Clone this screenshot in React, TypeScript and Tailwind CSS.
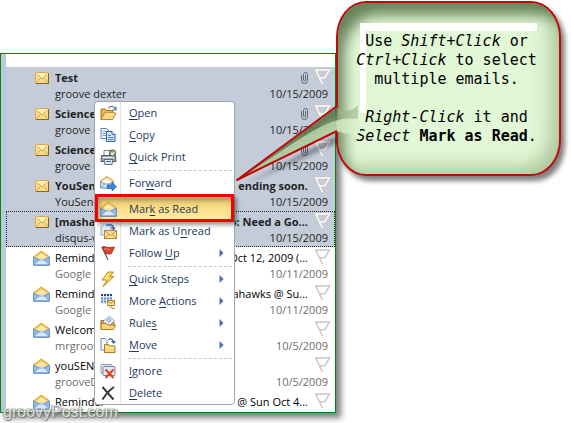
import { Fragment, ReactNode } from 'react';
import clsx from 'clsx';

interface Email {
  subject: string;
  rest?: string;
  sender?: string;
  date?: string;
  unread?: boolean;
  attachment?: boolean;
  focused?: boolean;
}

interface MenuEntry {
  before?: string;
  hotkey: string;
  after?: string;
  icon: ReactNode;
  submenu?: boolean;
  active?: boolean;
}

const emails: Email[] = [
  { subject: 'Test', sender: 'groove dexter', date: '10/15/2009', unread: true, attachment: true },
  { subject: 'Science', sender: 'groove dexter', date: '10/15/2009', unread: true, attachment: true },
  { subject: 'Science', sender: 'groove dexter', date: '10/15/2009', unread: true, attachment: true },
  { subject: 'YouSendIt', rest: 'ending soon.', sender: 'YouSendIt', date: '10/15/2009', unread: true },
  { subject: '[mashable]', rest: 'o: Need a Go...', sender: 'disqus-v', date: '10/15/2009', unread: true, focused: true },
  { subject: 'Reminder', rest: 'Oct 12, 2009 (...', sender: 'Google', date: '10/11/2009' },
  { subject: 'Reminder', rest: 'ahawks @ Su...', sender: 'Google', date: '10/11/2009' },
  { subject: 'Welcome', sender: 'mrgroove', date: '10/5/2009' },
  { subject: 'youSENDit', sender: 'grooveDexter', date: '10/5/2009' },
  { subject: 'Reminder', rest: '@ Sun Oct 4...' },
];

function ClosedMail() {
  return (
    <svg width="14" height="12" viewBox="0 0 14 12" aria-hidden="true">
      <rect x="0.5" y="0.5" width="13" height="11" rx="0.5" fill="#fbdc84" stroke="#d6ab4c" />
      <path d="M1 1h12v2L7 7.5 1 3z" fill="#fff0b8" />
      <path d="M1.5 2 7 7l5.500-5M1.500 10.500 5 6.500M12.500 10.500 9 6.500" fill="none" stroke="#c4963c" strokeWidth="0.900" />
      <path d="M1 11.500h12.500V1.500" fill="none" stroke="#86611f" />
    </svg>
  );
}

function OpenMail() {
  return (
    <svg width="17" height="16" viewBox="0 0 17 16" aria-hidden="true">
      <path d="M1 6.500 8.500 1 16 6.500v8H1z" fill="#f9c74f" stroke="#dba23a" />
      <path d="M3.500 7 8.500 3.500 13.500 7V11h-10z" fill="#fff3d0" />
      <path d="M4.500 6.500h8L14 9H3z" fill="#ffe09a" />
      <path d="M.5 7 8.500 11 16.500 7v8H.5z" fill="#8fbaea" stroke="#6d97cc" />
      <path d="M1 14.500 6 10h5l5 4.500" fill="#d6e9fc" stroke="#84acdc" />
      <path d="M.5 15.200h16" stroke="#456fa8" strokeWidth="0.800" />
    </svg>
  );
}

function FolderIcon() {
  return (
    <svg width="17" height="16" viewBox="0 0 17 16" aria-hidden="true">
      <path d="M1 14.500V4h4.500L7 5.500h6V10" fill="#e6b04a" stroke="#a97a24" />
      <path d="M1 14.500 4.500 8H16l-3.500 6.500z" fill="#ffd67c" stroke="#b98429" />
      <path d="M5 9h9.500" stroke="#fff0bf" />
      <path d="M8.500 3c2-2.500 5.500-2.500 6.500 1M16 1.500V5h-3.500" fill="none" stroke="#4f7295" strokeWidth="1.200" />
    </svg>
  );
}

function CopyIcon() {
  return (
    <svg width="16" height="16" viewBox="0 0 16 16" aria-hidden="true">
      <path d="M1 1.500h5.500L9 4v7.500H1z" fill="#eef5ff" stroke="#5b82bd" />
      <path d="M2.500 4.500h4M2.500 6.500h5M2.500 8.500h5" stroke="#7ba2da" />
      <path d="M6.500 4.500h5.500L15 7.500v7H6.500z" fill="#d5e6fb" stroke="#315fa8" />
      <path d="M12 4.500v3h3" fill="#fff" stroke="#315fa8" />
      <path d="M8 8.500h3M8 10.500h5.500M8 12.500h5.500" stroke="#4f82cc" />
    </svg>
  );
}

function PrinterIcon() {
  return (
    <svg width="17" height="16" viewBox="0 0 17 16" aria-hidden="true">
      <path d="M4 6V1.500h6V6" fill="#fff" stroke="#7d8591" />
      <path d="M1.500 6.500h14l.5 6H1z" fill="#a4a9b2" stroke="#4f5560" />
      <path d="M3 8.500h11" stroke="#eef0f3" />
      <path d="M4 10.500h9l-1 5H5z" fill="#dbe8f8" stroke="#626a78" />
      <path d="M6 12.500h5" stroke="#3b6fb8" />
      <circle cx="12.500" cy="4" r="3.300" fill="#7fa070" stroke="#4d6b42" strokeWidth="0.800" />
      <path d="m11 4 1.200 1.300L14.200 2.800" fill="none" stroke="#fff" strokeWidth="1.200" />
    </svg>
  );
}

function ForwardIcon() {
  return (
    <svg width="17" height="16" viewBox="0 0 17 16" aria-hidden="true">
      <path d="M.5 6 7 1.500 13.500 6v7H.5z" fill="#f9c74f" stroke="#d0a04c" />
      <path d="M2.500 6 7 3l4.500 3v3h-9z" fill="#fffaf0" />
      <path d="M.5 6.500 7 10l6.500-3.500v6.500H.5z" fill="#c4dcf5" stroke="#7c9fcb" />
      <path d="M1 12.500 5 9h4" fill="#eaf4ff" stroke="#7ea4d1" />
      <path d="M7.500 10h4.500V7.500l4.500 4.200-4.500 4.200V13.500H7.500z" fill="#3f86d8" stroke="#245fa6" strokeWidth="0.800" />
    </svg>
  );
}

function UnreadIcon() {
  return (
    <svg width="17" height="16" viewBox="0 0 17 16" aria-hidden="true">
      <path d="M1 4 6 .8 11 4v8H1z" fill="#dce9f8" stroke="#8ba7cc" />
      <rect x="4.500" y="7.500" width="12" height="8" fill="#fddf8f" stroke="#b98a35" />
      <path d="m5 8 5.500 4.500L16 8M5 15l4-4M16 15l-4-4" fill="none" stroke="#b98a35" strokeWidth="0.900" />
      <path d="M6 3c3-2.500 7-1.500 7.500 2.500" fill="none" stroke="#3a6cb3" strokeWidth="1.600" />
      <path d="M10.500 4.500h5.500L13.500 7.500z" fill="#3a6cb3" />
    </svg>
  );
}

function RedFlagIcon() {
  return (
    <svg width="16" height="16" viewBox="0 0 16 16" aria-hidden="true">
      <path d="M2 2 8 15" stroke="#6a6f78" strokeWidth="1.400" />
      <path d="M2 2c3-1.500 5 1 7.500.5L14.500 2 11.500 8.500C9 10 8 8 5.500 9z" fill="#d9412c" stroke="#a92818" strokeWidth="0.800" />
      <path d="M4 4c2-1 4 1 6 .5" fill="none" stroke="#f28a70" />
    </svg>
  );
}

function LightningIcon() {
  return (
    <svg width="16" height="16" viewBox="0 0 16 16" aria-hidden="true">
      <path d="M8 1h5.500L10 5.500h4L3 15.500 7 9H2z" fill="#ffd24f" stroke="#b98a2c" />
      <path d="M8.500 2.500 5 7.800h3.500" fill="none" stroke="#fff2bd" />
    </svg>
  );
}

function ActionsIcon() {
  return (
    <svg width="16" height="16" viewBox="0 0 16 16" aria-hidden="true">
      <rect x="1" y="1" width="11" height="10" fill="#dbe7f7" />
      <path d="M1 2h11" stroke="#2e4a78" strokeWidth="2" strokeDasharray="2 1" />
      <path d="M1 5.500h11M1 8.500h8" stroke="#5f88c4" strokeWidth="2" strokeDasharray="2 1" />
      <rect x="7.500" y="7.500" width="7" height="5" fill="#ffe08f" stroke="#b98a35" />
      <path d="m8 8 3 2.500L14 8" fill="none" stroke="#b98a35" />
      <path d="M9 14h3v1.500h3" fill="none" stroke="#c18f2b" />
    </svg>
  );
}

function RulesIcon() {
  return (
    <svg width="16" height="16" viewBox="0 0 16 16" aria-hidden="true">
      <path d="M1 14.500V5.500h4L6.500 7H14v3" fill="#e0a842" stroke="#a0731f" />
      <path d="m3.500 6 6-5 5 5-4.500 4H5z" fill="#eaf1fa" stroke="#7f95b3" strokeWidth="0.800" />
      <path d="m6.500 6 3.500-3M8 7.500 11.500 4.500" stroke="#4d7cc0" />
      <path d="M1 14.500V8.500h5.500l1.500 1.500h7.500l-2 4.500z" fill="#ffd277" stroke="#b07d26" />
    </svg>
  );
}

function MoveIcon() {
  return (
    <svg width="16" height="16" viewBox="0 0 16 16" aria-hidden="true">
      <path d="M1 1.500h4L7 3.500V13H1z" fill="#f5f9ff" stroke="#6f88ab" />
      <path d="M8.500 3c1.500-2 4.500-1 5 1.500" fill="none" stroke="#39659e" strokeWidth="1.200" />
      <path d="M11 4h5l-2.500 3z" fill="#39659e" />
      <path d="M4.500 15.500V7.500h4l1 1.500H15v6.500z" fill="#ffd277" stroke="#a97a24" />
      <path d="M5.500 10.500H14" stroke="#fff0bf" />
    </svg>
  );
}

function IgnoreIcon() {
  return (
    <svg width="16" height="16" viewBox="0 0 16 16" aria-hidden="true">
      <rect x="1" y="1.500" width="11" height="9" rx="1" fill="#eef2f7" stroke="#8594a9" />
      <rect x="3" y="3.500" width="12" height="9" rx="1" fill="#e3eaf3" stroke="#74859d" />
      <path d="m5.500 6.500 8 8.500M13.500 6.500l-8 8.500" stroke="#e0452c" strokeWidth="2.200" />
    </svg>
  );
}

function DeleteIcon() {
  return (
    <svg width="16" height="16" viewBox="0 0 16 16" aria-hidden="true">
      <path d="M2.500 2 13.500 14.500" stroke="#3a3a3a" strokeWidth="2" />
      <path d="M14 2C9 5.500 6 9 2.500 14.500" fill="none" stroke="#3a3a3a" strokeWidth="2" />
    </svg>
  );
}

function FlagOutline({ selected }: { selected?: boolean }) {
  return (
    <svg width="17" height="18" viewBox="0 0 17 18" fill="none" aria-hidden="true">
      {selected && (
        <path d="M1.500 1.500c4 2 8.500-.5 14 .5L11 9.500c-2 1-3-.5-5 .5M1.500 1.500 8.500 16" stroke="#b9b9b9" strokeWidth="3" />
      )}
      <path
        d="M1.500 1.500c4 2 8.500-.5 14 .5L11 9.500c-2 1-3-.5-5 .5M1.500 1.500 8.500 16"
        stroke={selected ? '#f6f4f0' : '#c9c9c9'}
        strokeWidth={selected ? 2 : 1.5}
      />
    </svg>
  );
}

function ClipIcon() {
  return (
    <svg width="7" height="12" viewBox="0 0 7 12" fill="none" stroke="#5b6473" aria-hidden="true">
      <path d="M.5 3v5.500a3 3 0 0 0 6 0V2.500a2 2 0 0 0-4 0V8a1 1 0 0 0 2 0V3" />
    </svg>
  );
}

const menuGroups: MenuEntry[][] = [
  [
    { hotkey: 'O', after: 'pen', icon: <FolderIcon /> },
    { hotkey: 'C', after: 'opy', icon: <CopyIcon /> },
    { hotkey: 'Q', after: 'uick Print', icon: <PrinterIcon /> },
  ],
  [{ before: 'For', hotkey: 'w', after: 'ard', icon: <ForwardIcon /> }],
  [
    { before: 'Mar', hotkey: 'k', after: ' as Read', icon: <OpenMail />, active: true },
    { before: 'Mark as U', hotkey: 'n', after: 'read', icon: <UnreadIcon /> },
    { before: 'Follow ', hotkey: 'U', after: 'p', icon: <RedFlagIcon />, submenu: true },
  ],
  [
    { hotkey: 'Q', after: 'uick Steps', icon: <LightningIcon />, submenu: true },
    { before: 'More ', hotkey: 'A', after: 'ctions', icon: <ActionsIcon />, submenu: true },
    { before: 'Rule', hotkey: 's', icon: <RulesIcon />, submenu: true },
    { hotkey: 'M', after: 'ove', icon: <MoveIcon />, submenu: true },
  ],
  [
    { hotkey: 'I', after: 'gnore', icon: <IgnoreIcon /> },
    { hotkey: 'D', after: 'elete', icon: <DeleteIcon /> },
  ],
];

function EmailRow({ email }: { email: Email }) {
  return (
    <li
      className={clsx(
        'flex h-9 border border-transparent pt-0.5 pr-0.5 last:h-[21px]',
        email.unread ? 'bg-[#c5ccd9] text-[#1f1f24]' : 'bg-white text-black',
        email.focused && 'border-dotted border-[#222222]!'
      )}
    >
      <span className="flex h-4 w-12 shrink-0 items-center pl-[26px]">
        <span className="flex w-[17px] justify-center">{email.unread ? <ClosedMail /> : <OpenMail />}</span>
      </span>
      <div className="min-w-0 flex-1">
        <div className="flex h-4 items-center gap-1.5">
          <span className={clsx('min-w-0 flex-1 overflow-hidden text-[11px] leading-4 whitespace-nowrap', email.unread && 'font-bold')}>
            {email.subject}
          </span>
          {email.rest && (
            <span className={clsx('text-[11px] leading-4 whitespace-nowrap', email.unread && 'font-bold')}>
              {email.rest}
            </span>
          )}
          {email.attachment && <ClipIcon />}
          <span className="w-[18px] shrink-0 pb-0.5">
            <FlagOutline selected={email.unread} />
          </span>
        </div>
        {email.date && (
          <div className={clsx('flex h-4 justify-between pr-1 text-[11px] leading-4 whitespace-nowrap', !email.unread && 'text-[#6d6d6d]')}>
            <span>{email.sender}</span>
            <span>{email.date}</span>
          </div>
        )}
      </div>
    </li>
  );
}

function MenuItem({ entry }: { entry: MenuEntry }) {
  return (
    <button
      type="button"
      role="menuitem"
      className={clsx(
        'relative flex h-[22px] w-full items-center pr-2.5 pl-[5px] text-left text-[11px] text-[#1e395b]',
        entry.active && 'bg-linear-to-b from-[#e5c46a] via-[#fbe08a] to-[#fdeaa6]'
      )}
    >
      <span className="mr-3 w-[17px] shrink-0">{entry.icon}</span>
      <span className="flex-1 whitespace-pre">
        {entry.before}
        <span className="underline underline-offset-2">{entry.hotkey}</span>
        {entry.after}
      </span>
      {entry.submenu && (
        <svg width="5" height="8" viewBox="0 0 5 8" aria-hidden="true">
          <path d="M.5 0 4.500 4 .5 8z" fill="#4a6fb5" />
        </svg>
      )}
      {entry.active && (
        <span className="absolute inset-x-0 -top-1 h-7 border-3 border-[#f60000] shadow-[3px_3px_4px_rgba(0,0,0,0.4),inset_2px_3px_4px_rgba(80,80,80,0.45)]" />
      )}
    </button>
  );
}

function ContextMenu() {
  return (
    <div
      role="menu"
      className="absolute top-[47px] right-[100px] w-[141px] rounded-sm border border-[#a0a5b0] bg-white bg-[linear-gradient(#e2e4e7,#e2e4e7)] bg-[length:1px_100%] bg-[position:25px_0] bg-no-repeat"
    >
      {menuGroups.map((group, i) => (
        <Fragment key={i}>
          {i > 0 && (
            <div role="separator" className="flex h-1 items-center pr-0.5 pl-[33px]">
              <div className="w-full border-t border-dashed border-[#c9c9c9]" />
            </div>
          )}
          {group.map((entry, j) => (
            <MenuItem key={j} entry={entry} />
          ))}
        </Fragment>
      ))}
    </div>
  );
}

function Callout() {
  return (
    <aside className="relative mt-px mr-2.5 w-[225px] shrink-0 self-start font-['DejaVu_Sans_Mono',monospace]">
      <div className="rounded-[30px/36px] border-2 border-[#bd0a0a] bg-[#e1f7d5] px-[22px] py-5 shadow-[4px_5px_5px_rgba(0,0,0,0.5),inset_12px_18px_14px_-6px_rgba(64,92,50,0.75),inset_-10px_-8px_18px_-2px_rgba(120,150,100,0.5)]">
        <div className="h-[131px] border-t-8 border-white bg-[linear-gradient(#ffffff,#ffffff)] bg-[length:6px_82px] bg-no-repeat pt-px">
          <div className="-mr-0.5 -ml-1.5 text-center text-[15px] leading-[19px] whitespace-nowrap text-black">
            <p>
              Use <em>Shift+Click</em> or
              <br />
              <em>Ctrl+Click</em> to select
              <br />
              multiple emails.
            </p>
            <p className="mt-[19px]">
              <em>Right-Click</em> it and
              <br />
              <em>Select</em> <strong>Mark as Read</strong>.
            </p>
          </div>
        </div>
      </div>
      <svg className="absolute top-[92px] -left-[102px]" width="134" height="100" viewBox="0 0 134 100" aria-hidden="true">
        <defs>
          <linearGradient id="tail" gradientUnits="userSpaceOnUse" x1="70" y1="34" x2="84" y2="56">
            <stop offset="0" stopColor="#4f6a43" />
            <stop offset="0.5" stopColor="#738f62" />
            <stop offset="1" stopColor="#a9c896" />
          </linearGradient>
          <linearGradient id="tailRoot" x1="0" y1="0" x2="1" y2="0">
            <stop offset="0" stopColor="#c3dcb2" />
            <stop offset="1" stopColor="#def4d1" />
          </linearGradient>
          <filter id="tailShadow" x="-20%" y="-20%" width="140%" height="150%">
            <feGaussianBlur stdDeviation="2" />
          </filter>
        </defs>
        <path d="M10 92 102 43V50z" fill="#000" opacity="0.4" filter="url(#tailShadow)" />
        <path d="M105 13 3 87 105 38z" fill="url(#tail)" opacity="0.9" />
        <path d="M105 27C85 31 60 50 10 83L105 38z" fill="#c3deb3" opacity="0.75" />
        <path d="M103 14C109 19 117 20 124 12V27H103z" fill="#9bb58b" opacity="0.6" />
        <path d="M102 28C108 25 116 25 126 26V40C118 42 110 41 103 38z" fill="url(#tailRoot)" />
        <path d="M103 13 3 87 103 38" fill="none" stroke="#c00808" strokeWidth="2" strokeLinejoin="round" />
      </svg>
    </aside>
  );
}

export default function App() {
  return (
    <main className="relative flex min-h-screen items-start bg-white font-['Open_Sans','Noto_Sans',sans-serif]">
      <section className="relative mt-[53px] mb-2 min-w-0 flex-1 border border-[#0a820a] shadow-[5px_5px_6px_rgba(0,0,0,0.5)]">
        <div className="border-l-[5px] border-[#b9c9e0] bg-white pt-[13px]">
          <ul>
            {emails.map((email, i) => (
              <EmailRow key={i} email={email} />
            ))}
          </ul>
        </div>
        <ContextMenu />
        <p className="absolute -bottom-3 left-0.5 font-['Liberation_Sans',sans-serif] text-base leading-6 text-white/70 [text-shadow:1px_1px_1px_#777777,-1px_0_1px_#999999]">
          groovyPost.com
        </p>
      </section>
      <Callout />
    </main>
  );
}
